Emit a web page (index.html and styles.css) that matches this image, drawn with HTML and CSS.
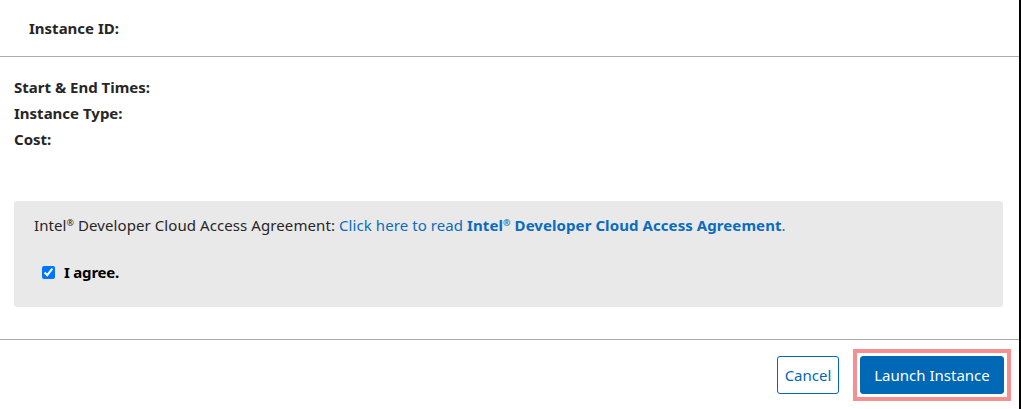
FILE: index.html
```html
<!DOCTYPE html>
<html>
<head>
<meta charset="utf-8">
<link rel="stylesheet" href="styles.css">
</head>
<body>
<div class="modal">
  <div class="modal-header">
    <span class="label">Instance ID:</span>
  </div>
  <div class="modal-body">
    <div class="details">
      <div class="label">Start &amp; End Times:</div>
      <div class="label">Instance Type:</div>
      <div class="label">Cost:</div>
    </div>
    <div class="agreement">
      <p class="agreement-text">Intel<sup>®</sup> Developer Cloud Access Agreement: <a class="link" href="#">Click here to read <strong>Intel<sup>®</sup> Developer Cloud Access Agreement</strong>.</a></p>
      <label class="agree-row"><input type="checkbox" checked class="agree-check"><span class="agree-text">I agree.</span></label>
    </div>
  </div>
  <div class="modal-footer">
    <button class="btn btn-outline">Cancel</button>
    <span class="focus-ring"><button class="btn btn-primary">Launch Instance</button></span>
  </div>
</div>
</body>
</html>
```
FILE: styles.css
```css
html, body {
  margin: 0;
  padding: 0;
  background: #fff;
}
body {
  font-family: "Noto Sans", "Open Sans", sans-serif;
  color: #262626;
  font-size: 15px;
}
.modal {
  width: 1019px;
  height: 409px;
  border-right: 2px solid #000;
  display: flex;
  flex-direction: column;
  overflow: hidden;
}
.modal-header {
  height: 57px;
  flex-shrink: 0;
  box-sizing: border-box;
  border-bottom: 1px solid #acacac;
  padding: 0 29px;
  display: flex;
  align-items: center;
}
.label {
  font-weight: 700;
  line-height: 26px;
}
.modal-body {
  padding: 17px 16px 0 14px;
}
.details {
  display: flex;
  flex-direction: column;
}
.agreement {
  margin-top: 49px;
  background: #e9e9e9;
  border-radius: 3px;
  padding: 13px 20px 24px 20px;
}
.agreement-text {
  margin: 0;
  line-height: 22px;
  letter-spacing: 0.08px;
}
sup {
  font-size: 9px;
  vertical-align: 5px;
  line-height: 0;
}
.link {
  color: #0a6cbd;
  text-decoration: none;
}
.agree-row {
  margin-top: 25px;
  display: flex;
  align-items: center;
  padding-left: 4px;
  line-height: 22px;
}
.agree-check {
  margin: 0 9px 0 4px;
  width: 13px;
  height: 13px;
}
.agree-text {
  font-weight: 700;
  color: #000;
  letter-spacing: -0.2px;
}
.modal-footer {
  margin-top: auto;
  border-top: 1px solid #acacac;
  height: 70px;
  flex-shrink: 0;
  box-sizing: border-box;
  padding: 9px 8px 0 0;
  display: flex;
  justify-content: flex-end;
  align-items: flex-start;
  gap: 14px;
}
.btn {
  font-family: "Noto Sans", "Open Sans", sans-serif;
  font-size: 15px;
  height: 38px;
  border-radius: 3px;
  padding: 0;
  cursor: pointer;
  display: block;
}
.btn-outline {
  margin-top: 7px;
  width: 62px;
  background: #fff;
  color: #0068b5;
  border: 1px solid #0068b5;
}
.focus-ring {
  display: block;
  border: 4px solid #f4908f;
  padding: 3px;
  background: #fff;
}
.btn-primary {
  width: 144px;
  background: #0068b5;
  color: #fff;
  border: 1px solid #0068b5;
}
```
